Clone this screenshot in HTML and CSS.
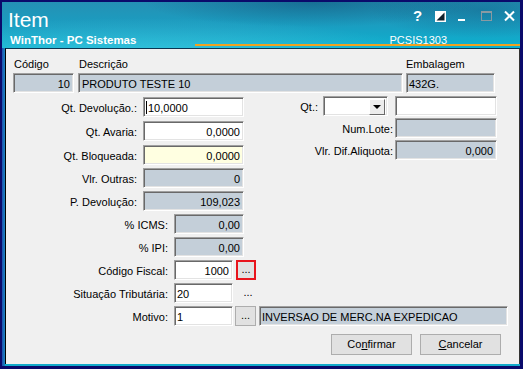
FILE: index.html
```html
<!DOCTYPE html>
<html lang="pt-BR">
<head>
    <meta charset="UTF-8">
    <title>Item</title>
    <link rel="stylesheet" href="styles.css">
</head>
<body>

    <div class="window">
        <div class="frame">

            <!-- Title bar -->
            <div class="titlebar">
                <div class="title-row">
                    <div class="title">Item</div>
                    <div class="controls">
                        <span class="ctl help">?</span>
                        <svg class="ctl" width="11" height="12" viewBox="0 0 11 12">
                            <rect x="0.5" y="1.5" width="10" height="10" fill="#fff" stroke="#fff"/>
                            <polygon points="9.5,2.5 9.5,10.5 1.5,10.5" fill="#10202a"/>
                        </svg>
                        <svg class="ctl" width="11" height="12" viewBox="0 0 11 12">
                            <rect x="0" y="9" width="7" height="2" fill="#fff"/>
                        </svg>
                        <svg class="ctl" width="11" height="12" viewBox="0 0 11 12">
                            <rect x="0.5" y="1.5" width="10" height="9" fill="none" stroke="#8a9aa2"/>
                            <rect x="0" y="1" width="11" height="2" fill="#8a9aa2"/>
                        </svg>
                        <svg class="ctl" width="11" height="12" viewBox="0 0 11 12">
                            <path d="M1 1.5 L10 10.5 M10 1.5 L1 10.5" stroke="#fff" stroke-width="2"/>
                        </svg>
                    </div>
                </div>
                <div class="sub-row">
                    <div class="subtitle">WinThor - PC Sistemas</div>
                    <div class="program">PCSIS1303</div>
                </div>
                <div class="accent"></div>
            </div>

            <!-- Form -->
            <div class="panel">
                <div class="head">
                    <div class="head-col col-code">
                        <div class="head-label">Código</div>
                        <div class="field ro num">10</div>
                    </div>
                    <div class="head-col col-desc">
                        <div class="head-label">Descrição</div>
                        <div class="field ro">PRODUTO TESTE 10</div>
                    </div>
                    <div class="head-col col-emb">
                        <div class="head-label">Embalagem</div>
                        <div class="field ro tight">432G.</div>
                    </div>
                </div>

                <div class="main">
                    <div class="col-left">
                        <div class="row">
                            <div class="lbl">Qt. Devolução.:</div>
                            <div class="field f-qty tight"><span class="caret"></span>10,0000</div>
                        </div>
                        <div class="row loose">
                            <div class="lbl">Qt. Avaria:</div>
                            <div class="field f-qty num">0,0000</div>
                        </div>
                        <div class="row loose">
                            <div class="lbl">Qt. Bloqueada:</div>
                            <div class="field f-qty num yellow">0,0000</div>
                        </div>
                        <div class="row">
                            <div class="lbl">Vlr. Outras:</div>
                            <div class="field f-qty num ro">0</div>
                        </div>
                        <div class="row">
                            <div class="lbl">P. Devolução:</div>
                            <div class="field f-qty num ro">109,023</div>
                        </div>
                        <div class="row">
                            <div class="lbl wide">% ICMS:</div>
                            <div class="field f-pct num ro">0,00</div>
                        </div>
                        <div class="row">
                            <div class="lbl wide">% IPI:</div>
                            <div class="field f-pct num ro">0,00</div>
                        </div>
                        <div class="row">
                            <div class="lbl wide">Código Fiscal:</div>
                            <div class="field f-code num">1000</div>
                            <div class="dots marked">...</div>
                        </div>
                        <div class="row">
                            <div class="lbl wide">Situação Tributária:</div>
                            <div class="field f-code tight">20</div>
                            <div class="dots flat">...</div>
                        </div>
                    </div>

                    <div class="col-right">
                        <div class="rrow">
                            <div class="rlbl qt">Qt.:</div>
                            <div class="field combo"><div class="drop"><span class="arrow"></span></div></div>
                            <div class="field f-right gap"></div>
                        </div>
                        <div class="rrow">
                            <div class="rlbl">Num.Lote:</div>
                            <div class="field f-right ro"></div>
                        </div>
                        <div class="rrow">
                            <div class="rlbl">Vlr. Dif.Aliquota:</div>
                            <div class="field f-right ro num">0,000</div>
                        </div>
                    </div>
                </div>

                <div class="row motivo">
                    <div class="lbl wide">Motivo:</div>
                    <div class="field f-code tight">1</div>
                    <div class="dots small">...</div>
                    <div class="field f-desc ro tight">INVERSAO DE MERC.NA EXPEDICAO</div>
                </div>

                <div class="actions">
                    <div class="btn">Co<u>n</u>firmar</div>
                    <div class="btn"><u>C</u>ancelar</div>
                </div>
            </div>

        </div>
    </div>

</body>
</html>
```

FILE: styles.css
```css
* {
    box-sizing: border-box;
}

body {
    margin: 0;
    font-family: 'Liberation Sans', Arial, sans-serif;
    font-size: 11px;
    color: #000;
}

.window {
    width: 523px;
    height: 369px;
    background: #0a0a6b;
    padding: 2px 3px 3px 2px;
}

.frame {
    height: 100%;
    display: flex;
    flex-direction: column;
    background: linear-gradient(90deg, #1d4fae 0, #1a86c2 3px, #12aacb 3px);
}

/* title bar */
.titlebar {
    height: 46px;
    flex-shrink: 0;
    padding: 6px 5px 0 6px;
    color: #fff;
    display: flex;
    flex-direction: column;
    background:
        radial-gradient(ellipse 240px 36px at 310px 0, rgba(8, 70, 110, 0.45), rgba(8, 70, 110, 0) 70%),
        radial-gradient(ellipse 160px 40px at 480px 8px, rgba(8, 80, 120, 0.35), rgba(8, 80, 120, 0) 70%),
        radial-gradient(ellipse 420px 60px at 140px 58px, rgba(150, 230, 245, 0.35), rgba(150, 230, 245, 0) 70%),
        linear-gradient(180deg, #2590b4 0%, #199fc2 55%, #0cb2d0 100%);
}

.title-row {
    display: flex;
    justify-content: space-between;
    align-items: flex-start;
    height: 24px;
}

.title {
    font-size: 21px;
    line-height: 24px;
}

.controls {
    display: flex;
    gap: 12px;
    margin-top: 2px;
    height: 12px;
}

.ctl {
    display: block;
    width: 11px;
    height: 12px;
}

.help {
    font-weight: bold;
    font-size: 15px;
    line-height: 12px;
    text-align: center;
}

.sub-row {
    display: flex;
    height: 10px;
    margin-top: 3px;
    line-height: 11px;
}

.subtitle {
    font-weight: bold;
    font-size: 11.5px;
    margin-left: 2px;
}

.program {
    margin-left: auto;
    margin-right: 68px;
}

.accent {
    height: 2px;
    margin: -1px -5px 0 187px;
    background: #f0a21e;
}

/* form panel */
.panel {
    flex: 1;
    margin: 0 0 2px 3px;
    background: #f0f0f0;
    border-left: 1px solid #000;
    border-top: 1px solid #0c3550;
    border-right: 1px solid #333;
    padding: 8px 11px 0 7px;
}

.head {
    display: flex;
}

.head-label {
    line-height: 14px;
    height: 14px;
    margin-bottom: 2px;
    padding-left: 1px;
}

.col-code {
    width: 61px;
}

.col-desc {
    width: 325px;
    margin-left: 4px;
}

.col-emb {
    width: 89px;
    margin-left: 3px;
}

.col-emb .head-label {
    padding-left: 0;
}

.field {
    height: 20px;
    flex-shrink: 0;
    background: #fff;
    border: 1px solid;
    border-color: #a0a0a0 #fff #fff #a0a0a0;
    box-shadow: inset 1px 1px 0 #696969, inset -1px -1px 0 #e3e3e3;
    padding: 2px 3px 0 3px;
    line-height: 16px;
    white-space: nowrap;
    overflow: hidden;
}

.field.tight {
    padding-left: 2px;
}

.field.num {
    text-align: right;
}

.field.ro {
    background: #c4cfd9;
}

.field.yellow {
    background: #ffffe1;
}

.caret {
    display: inline-block;
    width: 1px;
    height: 13px;
    background: #000;
    vertical-align: -2px;
    margin-right: 1px;
}

.main {
    display: flex;
    margin-top: 4px;
}

.col-left {
    width: 250px;
    flex-shrink: 0;
}

.row {
    display: flex;
    margin-top: 3px;
}

.row:first-child {
    margin-top: 0;
}

.row.loose {
    margin-top: 4px;
}

.lbl {
    width: 124px;
    flex-shrink: 0;
    margin-right: 6px;
    text-align: right;
    padding-top: 3px;
    line-height: 16px;
    white-space: nowrap;
}

.lbl.wide {
    width: 155px;
}

.f-qty {
    width: 101px;
}

.f-pct {
    width: 70px;
}

.f-code {
    width: 59px;
}

.f-desc {
    width: 249px;
    margin-left: 3px;
}

.dots {
    width: 20px;
    height: 20px;
    flex-shrink: 0;
    margin-left: 3px;
    text-align: center;
    line-height: 16px;
    background: #e1e1e1;
    border: 1px solid #adadad;
}

.dots.marked {
    border: 2px solid #e8141c;
    line-height: 14px;
}

.dots.flat {
    background: none;
    border-color: transparent;
    margin-left: 5px;
}

.dots.small {
    width: 21px;
    margin-left: 2px;
}

.col-right {
    flex: 1;
    display: flex;
    flex-direction: column;
    align-items: flex-end;
    gap: 2px;
    margin-top: -1px;
    margin-right: 11px;
}

.rrow {
    display: flex;
}

.rlbl {
    padding-top: 3px;
    line-height: 16px;
    margin-right: 2px;
    white-space: nowrap;
}

.rlbl.qt {
    margin-right: 5px;
}

.f-right {
    width: 102px;
}

.f-right.gap {
    margin-left: 7px;
}

.combo {
    width: 65px;
    display: flex;
    justify-content: flex-end;
    padding: 2px 2px 2px 0;
}

.drop {
    width: 16px;
    height: 16px;
    background: #ececec;
    border: 1px solid;
    border-color: #fff #696969 #696969 #fff;
    display: flex;
    align-items: center;
    justify-content: center;
}

.arrow {
    width: 0;
    height: 0;
    border-left: 4px solid transparent;
    border-right: 4px solid transparent;
    border-top: 4px solid #000;
}

.motivo {
    margin-top: 3px;
}

.actions {
    display: flex;
    justify-content: flex-end;
    gap: 8px;
    margin-top: 8px;
    padding-right: 7px;
}

.btn {
    width: 81px;
    height: 21px;
    background: #e1e1e1;
    border: 1px solid #adadad;
    text-align: center;
    line-height: 19px;
}
```
